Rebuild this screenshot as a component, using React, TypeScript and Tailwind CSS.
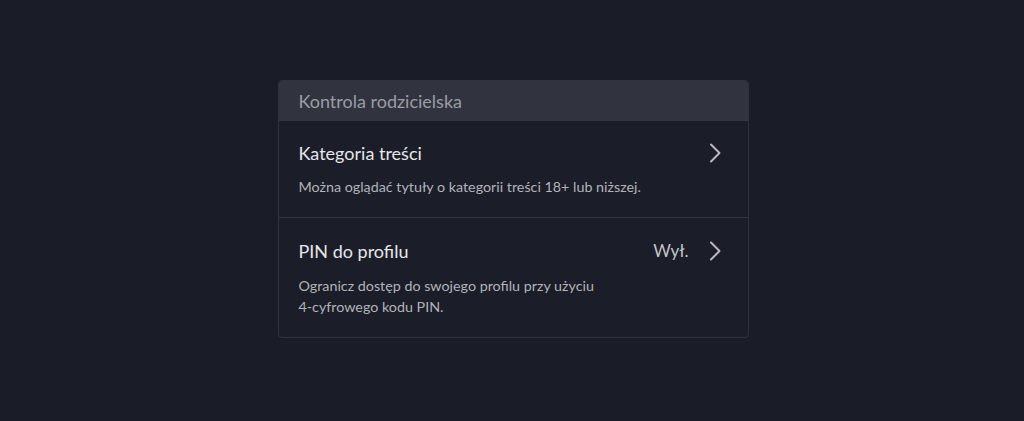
export default function App() {
  return (
    <div className="flex h-[421px] w-full items-center justify-center bg-[#1a1c27] font-['Lato','Noto_Sans',sans-serif]">
      <div className="mb-[3px] ml-[2px] w-[471px] overflow-hidden rounded-[4px] border border-[#30323d] bg-[#1b1d28]">
        <div className="flex h-[40px] items-center bg-[#31333e] px-5 text-[18px] text-[#9b9da4]">
          Kontrola rodzicielska
        </div>
        <Row title="Kategoria treści" lines={["Można oglądać tytuły o kategorii treści 18+ lub niższej."]} />
        <div className="h-px bg-[#30323d]" />
        <Row
          title="PIN do profilu"
          value="Wył."
          lines={["Ogranicz dostęp do swojego profilu przy użyciu", "4-cyfrowego kodu PIN."]}
        />
      </div>
    </div>
  );
}

function Row({ title, value, lines }: { title: string; value?: string; lines: string[] }) {
  return (
    <div className="flex flex-col gap-[11px] pb-[20px] pl-5 pr-[26px] pt-[20px]">
      <div className="flex items-center justify-between">
        <span className="text-[18px] leading-[24px] text-[#e6e6ea]">{title}</span>
        <div className="flex items-center gap-[19px]">
          {value && <span className="text-[17px] text-[#c4c5cb]">{value}</span>}
          <svg width="14" height="20" viewBox="0 0 14 20" fill="none">
            <path d="M3 1.5 L11.5 10 L3 18.5" stroke="#b9bac1" strokeWidth="2" strokeLinecap="round" strokeLinejoin="round" />
          </svg>
        </div>
      </div>
      <div className="text-[14.3px] leading-[21px] text-[#b2b4ba]">
        {lines.map((l) => (
          <div key={l}>{l}</div>
        ))}
      </div>
    </div>
  );
}
